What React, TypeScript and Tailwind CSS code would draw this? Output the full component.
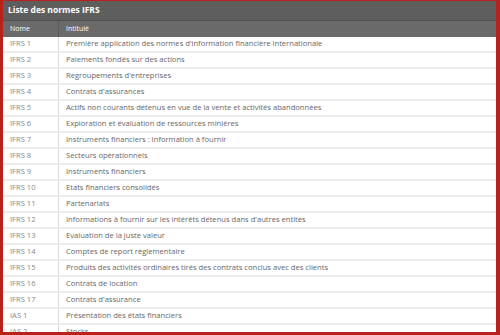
const rows: [string, string][] = [
  ['IFRS 1', "Première application des normes d'information financière internationale"],
  ['IFRS 2', 'Paiements fondés sur des actions'],
  ['IFRS 3', "Regroupements d'entreprises"],
  ['IFRS 4', "Contrats d'assurances"],
  ['IFRS 5', 'Actifs non courants détenus en vue de la vente et activités abandonnées'],
  ['IFRS 6', 'Exploration et évaluation de ressources minières'],
  ['IFRS 7', 'Instruments financiers : Information à fournir'],
  ['IFRS 8', 'Secteurs opérationnels'],
  ['IFRS 9', 'Instruments financiers'],
  ['IFRS 10', 'Etats financiers consolidés'],
  ['IFRS 11', 'Partenariats'],
  ['IFRS 12', "Informations à fournir sur les intérêts détenus dans d'autres entités"],
  ['IFRS 13', 'Evaluation de la juste valeur'],
  ['IFRS 14', 'Comptes de report réglementaire'],
  ['IFRS 15', 'Produits des activités ordinaires tirés des contrats conclus avec des clients'],
  ['IFRS 16', 'Contrats de location'],
  ['IFRS 17', "Contrats d'assurance"],
  ['IAS 1', 'Présentation des états financiers'],
  ['IAS 2', 'Stocks'],
];

export default function App() {
  return (
    <div className="w-[500px] h-[335px] overflow-hidden bg-[#b8211c] pl-[3px] pr-[4px] pt-[1px] pb-[3px] font-['Open_Sans',sans-serif]">
      <div className="h-full bg-white overflow-hidden">
        <div className="h-[20px] bg-[#5e5e5e] border-b border-[#4f4f4f] flex items-center px-[5px] text-white text-[8.5px] font-bold">
          Liste des normes IFRS
        </div>
        <div className="h-[16px] bg-[#6a6a6a] flex text-white text-[7px]">
          <div className="w-[56px] border-r border-[#5a5a5a] flex items-center pl-[7px]">Nome</div>
          <div className="flex-1 flex items-center pl-[7px]">Intitulé</div>
        </div>
        {rows.map(([code, label]) => (
          <div key={code} className="h-[16px] flex border-b-2 border-[#ececec] text-[7.6px] text-[#666]">
            <div className="w-[56px] border-r border-[#dcdcdc] flex items-center pl-[7px] text-[#888]">{code}</div>
            <div className="flex-1 flex items-center pl-[7px] whitespace-nowrap">{label}</div>
          </div>
        ))}
      </div>
    </div>
  );
}
